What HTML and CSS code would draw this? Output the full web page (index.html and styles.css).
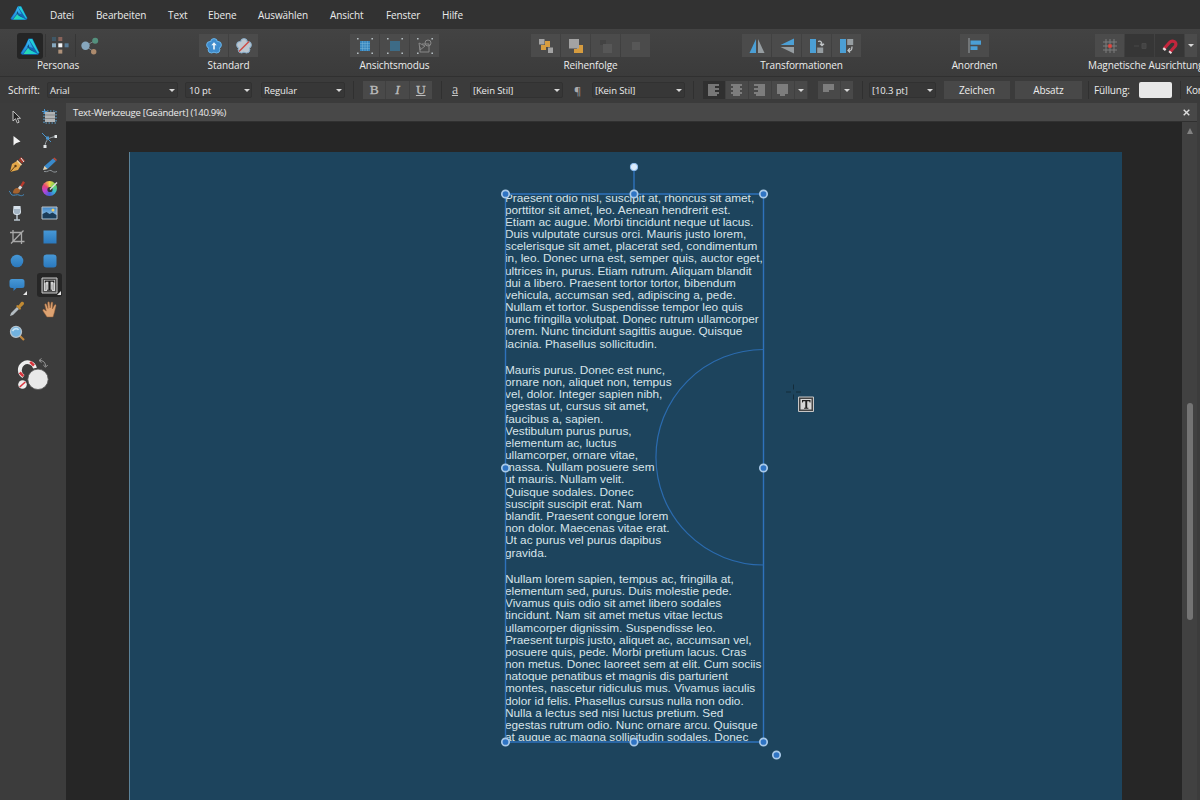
FILE: index.html
```html
<!DOCTYPE html>
<html lang="de">
<head>
<meta charset="utf-8">
<title>Text-Werkzeuge</title>
<link rel="stylesheet" href="styles.css">
</head>
<body>
<svg class="defs" width="0" height="0">
  <defs>
    <linearGradient id="g-blue" x1="0" y1="0" x2="0" y2="1"><stop offset="0" stop-color="#4798d6"/><stop offset="1" stop-color="#2a78bd"/></linearGradient>
    <linearGradient id="g-side" x1="0" y1="0" x2="0" y2="1"><stop offset="0" stop-color="#3bbdf2"/><stop offset="1" stop-color="#1c86d8"/></linearGradient>
    <linearGradient id="g-base" x1="0" y1="0" x2="1" y2="0"><stop offset="0" stop-color="#2ee0a6"/><stop offset="1" stop-color="#12c4e4"/></linearGradient>
    <linearGradient id="g-sky" x1="0" y1="0" x2="0" y2="1"><stop offset="0" stop-color="#3f86c8"/><stop offset="1" stop-color="#a9d3ee"/></linearGradient>
    <symbol id="logo" viewBox="0 0 20 20">
      <path d="M8.500 1.500h4l7 15-1.500 2.300H2L.5 17 5.500 8.500z" fill="#1565b4"/>
      <path d="M8.800 2h3.400l6.600 14.500-1 .5z" fill="#22cfd8"/>
      <path d="M8.600 2.300 13 11.500 8 10 3 17.500 1.200 17 6 8.800z" fill="url(#g-side)"/>
      <path d="M8 11.500 3.500 18h14L9.500 13z" fill="url(#g-base)"/>
      <path d="m8.700 7.500-1.500 2.700 8 6-5.500-2.700" fill="#14507c"/>
    </symbol>
    <symbol id="corners" viewBox="0 0 16 16"><path d="M0 0h1.600v1.600H0zM14.400 0H16v1.600h-1.600zM0 14.400h1.600V16H0zM14.400 14.400H16V16h-1.600z" fill="#b4bcc0"/></symbol>
    <symbol id="flower" viewBox="0 0 18 18"><g><circle cx="9" cy="5" r="3.400"/><circle cx="5" cy="7.900" r="3.400"/><circle cx="13" cy="7.900" r="3.400"/><circle cx="6.500" cy="12.600" r="3.400"/><circle cx="11.500" cy="12.600" r="3.400"/></g></symbol>
  </defs>
</svg>

<nav class="menubar">
  <svg class="app-logo" width="18" height="16" viewBox="0 0 20 20" preserveAspectRatio="none"><use href="#logo"/></svg>
  <span class="m1">Datei</span><span class="m2">Bearbeiten</span><span class="m3">Text</span><span class="m4">Ebene</span><span class="m5">Auswählen</span><span class="m6">Ansicht</span><span class="m7">Fenster</span><span class="m8">Hilfe</span>
</nav>

<header class="toolbar">
  <section class="group personas">
    <div class="btns">
      <b class="btn active"><svg width="20" height="19" viewBox="0 0 20 20" preserveAspectRatio="none"><use href="#logo"/></svg></b>
      <b class="btn flat"><svg width="17" height="17" viewBox="0 0 17 17">
        <path d="M0 0h4v4H0z" fill="#3f5867"/><path d="M6.300 0h4v4h-4z" fill="#89635a"/>
        <path d="M0 6.300h4v4H0z" fill="#86a7bd"/><path d="M6.300 6.300h4v4h-4z" fill="#f4f6f7"/><path d="M12.600 6.300h4v4h-4z" fill="#587b96"/>
        <path d="M6.300 12.600h4v4h-4z" fill="#af927a"/></svg></b>
      <b class="btn flat"><svg width="18" height="18" viewBox="0 0 18 18"><path d="M4.500 9 14 3.500M4.500 9l8 5.500" stroke="#7d8589" stroke-width="1"/><circle cx="4.500" cy="8.800" r="4.200" fill="#86a6bd"/><circle cx="14.200" cy="3.700" r="3" fill="#54907d"/><circle cx="12.700" cy="14.800" r="2.700" fill="#ad8b6d"/></svg></b>
    </div>
    <span>Personas</span>
  </section>
  <section class="group standard">
    <div class="btns">
      <b class="btn"><svg width="18" height="18" viewBox="0 0 18 18"><use href="#flower" fill="#3f8ccd" stroke="#6ab4e8" stroke-width="1"/><circle cx="9" cy="9.300" r="5.500" fill="#3f8ccd"/><path d="m9 5.300 2.700 3H9.800v4.200H8.200V8.300H6.300z" fill="#eef5fa"/></svg></b>
      <b class="btn"><svg width="18" height="18" viewBox="0 0 18 18"><use href="#flower" fill="#bdc7d0" stroke="#86abc9" stroke-width="1"/><circle cx="9" cy="9.300" r="5.500" fill="#bdc7d0"/><path d="M4 14.500 14 4.500" stroke="#cf4a42" stroke-width="1.500"/></svg></b>
    </div>
    <span>Standard</span>
  </section>
  <section class="group view">
    <div class="btns">
      <b class="btn"><svg width="16" height="16" viewBox="0 0 16 16"><path d="M3 3h10v10H3z" fill="#3785bd"/><path d="M3 5.500h10M3 8h10M3 10.500h10M5.500 3v10M8 3v10M10.500 3v10" stroke="#79b4d8" stroke-width=".5"/><use href="#corners"/></svg></b>
      <b class="btn"><svg width="16" height="16" viewBox="0 0 16 16"><path d="M3 3h10v10H3z" fill="#3d6b86"/><use href="#corners"/></svg></b>
      <b class="btn"><svg width="16" height="16" viewBox="0 0 16 16"><g fill="none" stroke="#888"><path d="M5 6h7v8H3V9"/><circle cx="11" cy="5" r="3"/><path d="m2 5 6 3-5 4z"/></g><use href="#corners"/></svg></b>
    </div>
    <span>Ansichtsmodus</span>
  </section>
  <section class="group order">
    <div class="btns">
      <b class="btn"><svg width="16" height="16" viewBox="0 0 16 16"><path d="M7 3h5v6H8v3H3V7h4z" fill="#d69c3f"/><path d="M1 1h5.500v5.500H1zM10 9.500h5V15h-5z" fill="#a3a3a3"/></svg></b>
      <b class="btn"><svg width="16" height="16" viewBox="0 0 16 16"><path d="M9 7h6v8H6v-4h3z" fill="#d69c3f"/><path d="M1 1h10v9.500H1z" fill="#a3a3a3"/></svg></b>
      <b class="btn"><svg width="16" height="16" viewBox="0 0 16 16"><path d="M2 2h6v5H2z" fill="#434343"/><path d="M5 6h9v9H5z" fill="#575757"/></svg></b>
      <b class="btn"><svg width="16" height="16" viewBox="0 0 16 16"><path d="M4 4h8v8H4z" fill="#575757"/></svg></b>
    </div>
    <span>Reihenfolge</span>
  </section>
  <section class="group transform">
    <div class="btns">
      <b class="btn"><svg width="16" height="16" viewBox="0 0 16 16"><path d="M7 1v14H.5z" fill="#4b9fd5"/><path d="M9 1v14h6.500z" fill="#969da1"/></svg></b>
      <b class="btn"><svg width="16" height="16" viewBox="0 0 16 16"><path d="M15 .5V7H1.500z" fill="#4b9fd5"/><path d="M15 15.500V9H1.500z" fill="#969da1"/></svg></b>
      <b class="btn"><svg width="16" height="16" viewBox="0 0 16 16"><path d="M1 1h6v14H1z" fill="#4b9fd5"/><path d="M8.200 9.500h6V15h-6z" fill="#969da1"/><path d="M9 3.500c3-1 4 .5 4 4M11 5.700l2 2 2-2" fill="none" stroke="#c2c6c8" stroke-width="1.300"/></svg></b>
      <b class="btn"><svg width="16" height="16" viewBox="0 0 16 16"><path d="M1 1h6v14H1z" fill="#4b9fd5"/><path d="M8.200 1h6v6h-6z" fill="#969da1"/><path d="M9 12.500c3 1 4-.5 4-4M11 10.300l-2 2.200 2 2" fill="none" stroke="#c2c6c8" stroke-width="1.300"/></svg></b>
    </div>
    <span>Transformationen</span>
  </section>
  <section class="group arrange">
    <div class="btns"><b class="btn"><svg width="14" height="15" viewBox="0 0 14 15"><path d="M.5 0h1v15h-1z" fill="#9aa0a4"/><path d="M2.500 2.500H13V6.700H2.500zM2.500 8.200h7V12h-7z" fill="#4b9fd5"/></svg></b></div>
    <span>Anordnen</span>
  </section>
  <section class="group snap">
    <div class="btns">
      <b class="btn"><svg width="16" height="16" viewBox="0 0 16 16"><path d="M1 4h14M1 8h14M1 12h14M4 1v14M8 1v14M12 1v14" stroke="#7c7c7c" stroke-width="1"/><path d="M6.300 6.300h3.400v3.400H6.300z" fill="#e8433b"/></svg></b>
      <b class="btn dark"><svg width="16" height="16" viewBox="0 0 16 16"><path d="M2 8h5M10 5.500h4v5h-4z" stroke="#484848" fill="#444"/></svg></b>
      <b class="btn dark"><svg width="16" height="16" viewBox="0 0 16 16"><path d="M2.200 10.500 7.500 4.500C10.300 1.300 15.800 4.300 13.300 8L8 14" fill="none" stroke="#c3263d" stroke-width="3.200"/><path d="m2 9.200 2.400 2.100-1.500 1.700-2.400-2.100zM7.700 12.500l2.400 2-1.300 1.500-2.400-2z" fill="#e9dfe0"/></svg></b>
      <b class="btn drop"><i class="arrow"></i></b>
    </div>
    <span>Magnetische Ausrichtung</span>
  </section>
</header>

<div class="context">
  <span class="lbl l-font">Schrift:</span>
  <div class="field f-font"><span>Arial</span><i class="arrow"></i></div>
  <div class="field f-size"><span>10 pt</span><i class="arrow"></i></div>
  <div class="field f-style"><span>Regular</span><i class="arrow"></i></div>
  <i class="sep s1"></i>
  <div class="seg biu"><b>B</b><b class="it">I</b><b class="un">U</b></div>
  <i class="sep s2"></i>
  <span class="glyph-a">a</span>
  <div class="field f-cs"><span>[Kein Stil]</span><i class="arrow"></i></div>
  <span class="pilcrow">¶</span>
  <div class="field f-ps"><span>[Kein Stil]</span><i class="arrow"></i></div>
  <i class="sep s3"></i>
  <div class="seg align">
    <b class="on"><svg width="12" height="12"><path d="M0 1h11M0 3h7M0 5h11M0 7h7M0 9h11M0 11h9"/></svg></b>
    <b><svg width="12" height="12"><path d="M0 1h11M2 3h7M0 5h11M2 7h7M0 9h11M2 11h7"/></svg></b>
    <b><svg width="12" height="12"><path d="M0 1h11M4 3h7M0 5h11M4 7h7M0 9h11M2 11h9"/></svg></b>
    <b><svg width="12" height="12"><path d="M0 1h11M0 3h11M0 5h11M0 7h11M0 9h11M3 11h5"/></svg></b>
    <b class="nar"><i class="arrow"></i></b>
  </div>
  <div class="seg valign">
    <b><svg width="12" height="12"><path d="M0 1h11M0 3h11M0 5h11M0 7h6"/></svg></b>
    <b class="nar"><i class="arrow"></i></b>
  </div>
  <i class="sep s4"></i>
  <div class="field f-lead"><span>[10.3 pt]</span><i class="arrow"></i></div>
  <div class="push p1">Zeichen</div>
  <div class="push p2">Absatz</div>
  <i class="sep s5"></i>
  <span class="lbl l-fill">Füllung:</span>
  <i class="swatch"></i>
  <i class="sep s6"></i>
  <span class="lbl l-kon">Kontur:</span>
</div>

<main class="work">
  <aside class="tools">
    <div class="grid">
      <b><svg width="16" height="16" viewBox="0 0 16 16"><path d="M4 2v10l2.500-2.300L8.300 14l1.800-.8L8.300 9.300h3.200z" fill="#222" stroke="#c4c4c4" stroke-width="1"/></svg></b>
      <b><svg width="16" height="16" viewBox="0 0 16 16"><path d="M3 3h10v10H3z" fill="#b2b4b5"/><path d="M3 6h10M3 9.500h10" stroke="#888"/><path d="M2 2h12v12H2z" fill="none" stroke="#5ba0cf" stroke-width="1.200" stroke-dasharray="1.500 1.500"/><path d="M2.500 0v5M0 2.500h5" stroke="#4b94cc"/></svg></b>
      <b><svg width="16" height="16" viewBox="0 0 16 16"><path d="M4.500 3v9.500L7 10.300l4.500-1.800z" fill="#f3f3f3"/></svg></b>
      <b><svg width="16" height="16" viewBox="0 0 16 16"><path d="M3 14C3 7 7 4 15 3.500" fill="none" stroke="#9ea6ab"/><path d="m0 0 9 9" stroke="#4b94cc"/><path d="M4 3.500h3v3H4z" fill="#4b94cc"/><path d="M12.500 2H15v3h-2.500zM1.500 12h3v3h-3z" fill="#e3e7e9"/></svg></b>
      <b><svg width="16" height="16" viewBox="0 0 16 16"><path d="m1 15 2-8 5-3 4 4-3 5z" fill="#e3a84a"/><path d="m1 15 5-5.500" stroke="#5b3b15"/><circle cx="6.500" cy="9" r="1.200" fill="#5b3b15"/><path d="M8 3.500 12.500 8" stroke="#f2d9a5" stroke-width="1.500"/><path d="m9.500 3 2.500-3 4 3.500L13 6.500z" fill="#a33a2c"/><path d="m12 1 3 4" stroke="#eee"/></svg></b>
      <b><svg width="16" height="16" viewBox="0 0 16 16"><path d="m1 13 1.500-4L11 1.500l3 2.500L5.500 12z" fill="#3a8acb"/><path d="m11 1.500 1.500-1L15 3l-1 1z" fill="#b94b3c"/><path d="m1 13 1.500-4 3 3z" fill="#ecd1a5"/><path d="M2 14.500c4 1 5-2 7-1s3 2.500 6 1" fill="none" stroke="#8e9498"/></svg></b>
      <b><svg width="16" height="16" viewBox="0 0 16 16"><path d="m11 5 3-5 2 1.500L13 6z" fill="#b93a2c"/><path d="m8.500 7.500 2.500-3 2.300 1.800L11 9z" fill="#ddd"/><path d="M4 12c0-4 3-5.500 5-5l2.200 2.200C11 12 7.500 13.500 4 12z" fill="#a5622e"/><path d="M0 10c2 1 1 3 3 4s5-1 7 0 3 1 5-.5" fill="none" stroke="#4588bb"/></svg></b>
      <b><i class="wheel"></i><svg class="over" width="16" height="16" viewBox="0 0 16 16"><circle cx="8" cy="8.500" r="2.600" fill="#333"/><path d="m8 8.500 7-7" stroke="#dcdcdc" stroke-width="1.500"/></svg></b>
      <b><svg width="16" height="16" viewBox="0 0 16 16"><path d="M4.500 1h7l.5 6c0 2-1.500 3-3.200 3h-1.600C5.500 10 4 9 4 7z" fill="#d7e1ea"/><path d="M5 4h6v3c0 1.500-1.300 2-2.500 2h-1C6.300 9 5 8.500 5 7z" fill="#a3b4c3"/><path d="M8 10v4.500M5 15h6" stroke="#b9c5ce" stroke-width="1.500"/></svg></b>
      <b><svg width="17" height="14" viewBox="0 0 17 14"><path d="M1 1h15v12H1z" fill="url(#g-sky)" stroke="#b9c1c7"/><path d="m1.500 8 4-2 3 2 3-1.500 4 2.500v3.500h-14z" fill="#1b3c58"/><circle cx="12" cy="4" r="1.500" fill="#f3cf62"/></svg></b>
      <b><svg width="16" height="16" viewBox="0 0 16 16"><path d="M4 1v11.500h11.500M1 3.500h11.500V15M2 14.500 14.500 1.500" fill="none" stroke="#a9a9a9" stroke-width="1.300"/></svg></b>
      <b><svg width="14" height="14"><path d="M.5.5h13v13H.5z" fill="url(#g-blue)"/></svg></b>
      <b><svg width="14" height="14"><circle cx="7" cy="7" r="6.300" fill="url(#g-blue)"/></svg></b>
      <b><svg width="14" height="14"><rect x=".5" y=".5" width="13" height="13" rx="3" fill="url(#g-blue)"/></svg></b>
      <b class="more"><svg width="16" height="14"><path d="M3 1h10q2.500 0 2.500 2.500v4Q15.500 10 13 10H7.500l-3 3v-3H3Q.5 10 .5 7.500v-4Q.5 1 3 1z" fill="url(#g-blue)"/></svg></b>
      <b class="more sel"><svg width="17" height="17" viewBox="0 0 17 17"><path d="M1 1h15v15H1z" fill="#4c4c4c" stroke="#c9c9c9"/><path d="M3 3h11v11H3z" fill="#d4d4d4"/><path d="M4.500 6v7M12.500 6v7M6 7.500v5M11 7.500v5" stroke="#999" stroke-width=".8"/><path d="M3.700 3.500h9.600v2.300h-.8l-.7-1H9.600v8H11v1H6v-1h1.400v-8H5.200l-.7 1h-.8z" fill="#1c1c1c"/></svg></b>
      <b><svg width="16" height="16" viewBox="0 0 16 16"><path d="M1 15 2 12 8 6l2 2-6 6z" fill="#b3bcc2"/><path d="m7 5 1.500-1 1 .5L12 1.200c2-1.500 4 .8 2.500 2.500L11.500 6.500l.5 1L11 9z" fill="#c18a33"/></svg></b>
      <b><svg width="16" height="17" viewBox="0 0 16 17"><path d="M5 16 1 10c-.8-1.600.7-2 1.500-1.300L4.300 10 2.800 4c-.3-1.300 1.200-1.700 1.700-.5L6 7.500 5.700 1.800C5.700.6 7.300.5 7.500 1.700L8.200 7l.9-5.300c.2-1.200 1.800-1 1.700.3L10.400 8l2-3.800c.6-1.200 2-.5 1.600.7-1 3.100-1.300 6-2 7.800L11 16z" fill="#dda271" stroke="#8e5b35" stroke-width=".5"/></svg></b>
      <b><svg width="16" height="16" viewBox="0 0 16 16"><path d="m10.500 10.500 4.500 4.500" stroke="#c1873d" stroke-width="2.200"/><circle cx="7" cy="6.800" r="5.500" fill="#71b2df" stroke="#b4c2cc" stroke-width="1.300"/><path d="M3.500 6c2-3 5-3 6-1" fill="none" stroke="#c6e4f6" stroke-width="1.600"/></svg></b>
    </div>
    <svg class="colors" width="34" height="34" viewBox="0 0 34 34">
      <path d="M6.500 18.500A7.700 7.700 0 1 1 18 10.200" fill="none" stroke="#eee" stroke-width="3.800"/>
      <path d="m2.700 14.500 3.600 3.600M13.200 3.900l3.800 3.600" stroke="#d9353d" stroke-width="2.600"/>
      <circle cx="5.500" cy="26.500" r="4.300" fill="#eee"/><path d="m2.700 29 5.600-5" stroke="#d9353d" stroke-width="1.600"/>
      <circle cx="21" cy="21.300" r="10.200" fill="#e9e9e9" stroke="#555" stroke-width=".8"/>
      <path d="M22.500 2.500c4 0 6 2 6 6M24.500.5l-2.500 2 2.500 2M26.300 7l2.200 2.200L30.700 7" fill="none" stroke="#999" stroke-width="1"/>
    </svg>
  </aside>
  <section class="doc">
    <div class="tab"><span>Text-Werkzeuge [Geändert] (140.9%)</span><svg width="7" height="7"><path d="m.7.7 5.600 5.600M6.300.7.700 6.300" stroke="#ddd" stroke-width="1.400"/></svg></div>
    <div class="view-row">
      <div class="pasteboard">
        <div class="page">
          <div class="story">
            <p>Praesent odio nisl, suscipit at, rhoncus sit amet,<br>porttitor sit amet, leo. Aenean hendrerit est.<br>Etiam ac augue. Morbi tincidunt neque ut lacus.<br>Duis vulputate cursus orci. Mauris justo lorem,<br>scelerisque sit amet, placerat sed, condimentum<br>in, leo. Donec urna est, semper quis, auctor eget,<br>ultrices in, purus. Etiam rutrum. Aliquam blandit<br>dui a libero. Praesent tortor tortor, bibendum<br>vehicula, accumsan sed, adipiscing a, pede.<br>Nullam et tortor. Suspendisse tempor leo quis<br>nunc fringilla volutpat. Donec rutrum ullamcorper<br>lorem. Nunc tincidunt sagittis augue. Quisque<br>lacinia. Phasellus sollicitudin.</p>
            <p>Mauris purus. Donec est nunc,<br>ornare non, aliquet non, tempus<br>vel, dolor. Integer sapien nibh,<br>egestas ut, cursus sit amet,<br>faucibus a, sapien.<br>Vestibulum purus purus,<br>elementum ac, luctus<br>ullamcorper, ornare vitae,<br>massa. Nullam posuere sem<br>ut mauris. Nullam velit.<br>Quisque sodales. Donec<br>suscipit suscipit erat. Nam<br>blandit. Praesent congue lorem<br>non dolor. Maecenas vitae erat.<br>Ut ac purus vel purus dapibus<br>gravida.</p>
            <p>Nullam lorem sapien, tempus ac, fringilla at,<br>elementum sed, purus. Duis molestie pede.<br>Vivamus quis odio sit amet libero sodales<br>tincidunt. Nam sit amet metus vitae lectus<br>ullamcorper dignissim. Suspendisse leo.<br>Praesent turpis justo, aliquet ac, accumsan vel,<br>posuere quis, pede. Morbi pretium lacus. Cras<br>non metus. Donec laoreet sem at elit. Cum sociis<br>natoque penatibus et magnis dis parturient<br>montes, nascetur ridiculus mus. Vivamus iaculis<br>dolor id felis. Phasellus cursus nulla non odio.<br>Nulla a lectus sed nisi luctus pretium. Sed<br>egestas rutrum odio. Nunc ornare arcu. Quisque<br>at augue ac magna sollicitudin sodales. Donec</p>
          </div>
          <svg class="overlay" width="340" height="620" viewBox="495 150 340 620">
            <g fill="none" stroke="#2e72bc" stroke-width="1.400">
              <path d="M505.500 194h258v548h-258zM634 167v27"/>
              <path d="M763.500 349.500A107.500 107.700 0 0 0 763.500 565" stroke="#2b6baf" stroke-width="1.200"/>
            </g>
            <g fill="#2f74c4" stroke="#a9c9e8" stroke-width="1.700">
              <circle cx="505.500" cy="194" r="3.700"/><circle cx="634" cy="194" r="3.700"/><circle cx="763.500" cy="194" r="3.700"/>
              <circle cx="505.500" cy="468" r="3.700"/><circle cx="763.500" cy="468" r="3.700"/>
              <circle cx="505.500" cy="742" r="3.700"/><circle cx="634" cy="742" r="3.700"/><circle cx="763.500" cy="742" r="3.700"/><circle cx="776.500" cy="755" r="3.700"/>
            </g>
            <circle cx="634" cy="167" r="3.700" fill="#dcebfa" stroke="#8dbcf0"/>
            <path d="M786 392h5M796 392h5M793.500 384.500v5M793.500 394.500v5" stroke="#142c3b" stroke-width="1"/>
            <path d="M798.500 397h15v14.500h-15z" fill="#444" stroke="#c6c6c6"/><path d="M800.500 399h11v10.500h-11z" fill="#d7d7d7"/>
            <path d="M802 400h8.500v2.500h-.8l-.5-1.200h-2v6.500h1.200v1h-4.300v-1h1.200v-6.500h-2l-.5 1.200h-.8z" fill="#222"/>
          </svg>
        </div>
      </div>
      <div class="scroll"><i class="up"></i><i class="thumb"></i></div>
    </div>
  </section>
</main>
</body>
</html>
```

FILE: styles.css
```css
* { box-sizing: border-box; }
body {
  margin: 0;
  width: 1200px;
  height: 800px;
  overflow: hidden;
  display: flex;
  flex-direction: column;
  background: #3c3c3c;
  color: #ececec;
  font: 10px "Open Sans", "Noto Sans", sans-serif;
  letter-spacing: -0.1px;
  white-space: nowrap;
}
svg { display: block; flex: none; overflow: visible; }
i { display: block; }
.defs { position: absolute; }

/* Menu */
.menubar { height: 29px; flex: none; display: flex; align-items: center; background: #323232; padding: 1px 0 0 10px; }
.app-logo { margin: -4px 22px 0 0; }
.menubar span { flex: none; }
.m1 { width: 46px; } .m2 { width: 72px; } .m3 { width: 40px; } .m4 { width: 50px; }
.m5 { width: 72px; } .m6 { width: 56px; } .m7 { width: 56px; }

/* Main toolbar */
.toolbar { height: 48px; flex: none; display: flex; padding-top: 5px; background: linear-gradient(#434343, #3b3b3b); border-bottom: 1px solid #303030; }
.group { flex: none; display: flex; flex-direction: column; align-items: center; }
.group > span { line-height: 17px; letter-spacing: -0.1px; }
.btns { display: flex; gap: 1px; height: 23px; }
.btn { width: 29px; height: 23px; background: #4b4b4b; display: flex; align-items: center; justify-content: center; }
.btn.flat { background: none; border-left: 1px solid #363636; }
.btn.active { width: 26px; height: 26px; margin: -1px 1px 0 0; background: #252525; border-radius: 3px; }
.btn.dark { background: #363636; }
.btn.drop { width: 12px; }
.personas { width: 88px; margin-left: 17px; }
.personas .btns { margin-left: -1px; }
.personas > span { margin-left: -6px; }
.standard { width: 59px; margin-left: 94px; }
.view { width: 89px; margin-left: 92px; }
.order { width: 119px; margin-left: 92px; }
.transform { width: 119px; margin-left: 92px; }
.arrange { width: 29px; margin-left: 99px; }
.snap { width: 112px; margin-left: 99px; align-items: flex-start; }
.snap .btns { margin-left: 7px; }
.arrow { width: 0; height: 0; flex: none; border: 3px solid transparent; border-top: 3.500px solid #d8d8d8; border-bottom: 0; }

/* Context toolbar */
.context { height: 26px; flex: none; display: flex; align-items: center; background: #3b3b3b; overflow: hidden; }
.context > * { flex: none; }
.field { height: 16px; display: flex; align-items: center; justify-content: space-between; padding: 1px 2px 0 2px; background: #373737; border: 1px solid #313131; border-radius: 2px; font-size: 9.500px; }
.l-font { width: 39px; margin-left: 8px; }
.f-font { width: 131px; } .f-size { width: 67px; margin-left: 7px; padding: 1px 1px 0 3px; } .f-style { width: 84px; margin-left: 9px; }
.sep { width: 1px; height: 18px; background: #303030; }
.s1 { margin: 0 9px 0 8px; }
.s2 { margin: 0 8px 0 9px; }
.s3 { margin: 0 9px 0 8px; }
.s4 { margin: 0 7px 0 9px; }
.s5 { margin: 0 5px 0 6px; }
.s6 { margin: 0 5px 0 8px; }
.seg { display: flex; gap: 1px; height: 18px; background: #404040; }
.seg b { width: 22.300px; background: #494949; display: flex; align-items: center; justify-content: center; }
.seg b.on { background: #303030; }
.seg path { stroke: #8f8f8f; stroke-width: 1.500; }
.biu b { font: 13.500px "Liberation Serif", serif; -webkit-text-stroke: 0.300px #bdbdbd; color: #bdbdbd; }
.biu .it { font-style: italic; }
.biu .un { text-decoration: underline; }
.align { width: 105px; }
.align b { width: 22px; }
.valign { width: 35px; margin-left: 10px; }
.valign b { width: 22px; }
.valign b.nar, .align b.nar { width: 12px; }
.glyph-a { width: 20px; font: 14px "Liberation Serif", serif; text-decoration: underline; color: #c4c4c4; padding-left: 2px; }
.f-cs { width: 93px; }
.pilcrow { width: 29px; padding-left: 11px; color: #aaa; font-size: 11px; }
.f-ps { width: 93px; }
.f-lead { width: 67px; margin-left: -1px; }
.push { height: 18px; background: #484848; display: flex; align-items: center; justify-content: center; }
.p1 { width: 66px; margin-left: 8px; }
.p2 { width: 67px; margin-left: 5px; }
.l-fill { width: 45px; }
.swatch { width: 33px; height: 16px; background: #e8e8e8; border-radius: 2px; }

/* Workspace */
.work { flex: 1; min-height: 0; display: flex; background: #3c3c3c; }
.tools { width: 66px; flex: none; padding-top: 1.500px; }
.grid { display: grid; grid-template-columns: 32px 33px; grid-auto-rows: 24.100px; margin-left: 1px; }
.grid b { display: grid; place-items: center; position: relative; }
.grid .over { position: absolute; }
.wheel { width: 15px; height: 15px; border-radius: 50%; background: conic-gradient(#f1d34a, #6bd257, #39bfd0, #4560dd, #b944d6, #e84573, #f1d34a); }
.grid .sel { background: #262626; border-radius: 3px; margin: 0 4px; }
.more::after { content: ""; position: absolute; right: 6px; bottom: 2px; border: 2px solid #e8e8e8; border-top-color: transparent; border-left-color: transparent; }
.sel::after { right: 1px; }
.colors { margin: 13px 0 0 17px; }
.doc { flex: 1; min-width: 0; display: flex; flex-direction: column; margin-right: 3px; }
.tab { height: 19px; flex: none; display: flex; align-items: center; justify-content: space-between; background: #484848; padding: 1px 7px 0 7px; font-size: 9.500px; letter-spacing: -0.250px; border-bottom: 1px solid #303030; }
.view-row { flex: 1; min-height: 0; display: flex; }
.pasteboard { flex: 1; background: #262626; padding: 30px 60px 0 63px; overflow: hidden; }
.page { position: relative; height: 100%; background: #1d445d; border-left: 1px solid #5b8299; }
.scroll { width: 15px; flex: none; background: #414141; display: flex; flex-direction: column; align-items: center; padding-top: 6px; }
.up { border: 3px solid transparent; border-top: 0; border-bottom: 6px solid #828282; }
.thumb { width: 6px; height: 217px; margin-top: 269px; border-radius: 3px; background: #747474; }
.story { position: absolute; left: 375px; top: 39.500px; width: 262px; height: 549.500px; overflow: hidden; font: 11.800px/12.170px "Liberation Sans", Arial, sans-serif; letter-spacing: 0; color: #d8e4ea; }
.story p { margin: 0 0 14.200px; }
.overlay { position: absolute; left: 365px; top: -2px; }
```
